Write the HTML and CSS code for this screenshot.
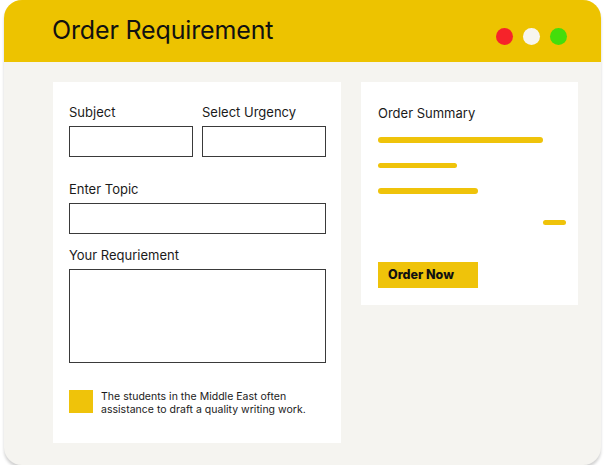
FILE: index.html
```html
<!DOCTYPE html>
<html>
<head>
<meta charset="utf-8">
<link rel="stylesheet" href="styles.css">
</head>
<body>
<div class="window">
  <header class="titlebar">
    <h1 class="title">Order Requirement</h1>
    <div class="dots">
      <span class="dot red"></span>
      <span class="dot white"></span>
      <span class="dot green"></span>
    </div>
  </header>
  <main class="content">
    <section class="card form-card">
      <div class="row">
        <div class="field">
          <label class="label">Subject</label>
          <div class="input"></div>
        </div>
        <div class="field">
          <label class="label">Select Urgency</label>
          <div class="input"></div>
        </div>
      </div>
      <div class="field topic">
        <label class="label">Enter Topic</label>
        <div class="input"></div>
      </div>
      <div class="field req">
        <label class="label">Your Requriement</label>
        <div class="input textarea"></div>
      </div>
      <div class="note">
        <span class="check"></span>
        <p class="note-text">The students in the Middle East often<br>assistance to draft a quality writing work.</p>
      </div>
    </section>
    <section class="card summary-card">
      <h2 class="summary-title">Order Summary</h2>
      <div class="bar bar1"></div>
      <div class="bar bar2"></div>
      <div class="bar bar3"></div>
      <div class="bar bar4"></div>
      <button class="order-btn">Order Now</button>
    </section>
  </main>
</div>
</body>
</html>
```

FILE: styles.css
```css
* { box-sizing: border-box; }
html, body { margin: 0; padding: 0; background: #ffffff; }
body { font-family: "Inter", "Open Sans", sans-serif; color: #111; }

.window {
  margin-left: 4px;
  width: 597px;
  height: 465px;
  border-radius: 18px;
  background: #f5f4f0;
  overflow: hidden;
  box-shadow: 0 3px 3px rgba(0,0,0,0.18);
}

.titlebar {
  height: 62px;
  background: #edc300;
  display: flex;
  align-items: center;
  justify-content: space-between;
  padding: 0 34px 0 48px;
}
.title {
  margin: 0;
  font-family: "Inter", sans-serif;
  font-weight: 400;
  font-size: 25px;
  letter-spacing: -0.15px;
  color: #111;
  padding-bottom: 2px;
}
.dots { display: flex; gap: 10px; padding-top: 10px; }
.dot { width: 17px; height: 17px; border-radius: 50%; display: block; }
.red { background: #f6232a; }
.white { background: #f7f5ef; }
.green { background: #44dd0b; }

.content {
  display: flex;
  align-items: flex-start;
  gap: 20px;
  padding: 20px 0 0 49px;
}
.card { background: #fff; }

.form-card {
  width: 288px;
  height: 361px;
  padding: 22px 15px 0 16px;
}
.row { display: flex; gap: 9px; }
.row .field { width: 124px; }
.label {
  display: block;
  font-family: "Inter", sans-serif;
  font-size: 13px;
  color: #1a1a1a;
  line-height: 16px;
  margin-bottom: 6px;
}
.input {
  height: 31px;
  border: 1.5px solid #3a3a3a;
  background: #fff;
}
.topic { margin-top: 24px; }
.req { margin-top: 13px; }
.textarea { height: 94px; }

.note {
  display: flex;
  align-items: flex-start;
  gap: 8px;
  margin-top: 27px;
}
.check {
  width: 24px;
  height: 23px;
  background: #efc30a;
  flex: none;
}
.note-text {
  margin: 0;
  font-family: "Inter", sans-serif;
  font-size: 10.5px;
  letter-spacing: 0.02px;
  line-height: 13px;
  color: #1a1a1a;
}

.summary-card {
  width: 217px;
  height: 223px;
  padding: 23px 0 0 17px;
}
.summary-title {
  margin: 0 0 16px;
  font-family: "Inter", sans-serif;
  font-weight: 400;
  font-size: 13px;
  line-height: 16px;
  color: #1a1a1a;
}
.bar { height: 5.5px; border-radius: 3px; background: #efc30a; }
.bar1 { width: 165px; margin-top: 15px; }
.bar2 { width: 79px; margin-top: 20px; }
.bar3 { width: 100px; margin-top: 20px; }
.bar4 { width: 23px; margin-top: 26px; margin-left: 165px; }
.order-btn {
  display: block;
  margin-top: 37px;
  width: 100px;
  height: 26px;
  border: none;
  background: #efc30a;
  font-family: "Inter", sans-serif;
  font-weight: 800;
  font-size: 12.5px;
  color: #111;
  padding: 0 14px 2px 0;
}
```
